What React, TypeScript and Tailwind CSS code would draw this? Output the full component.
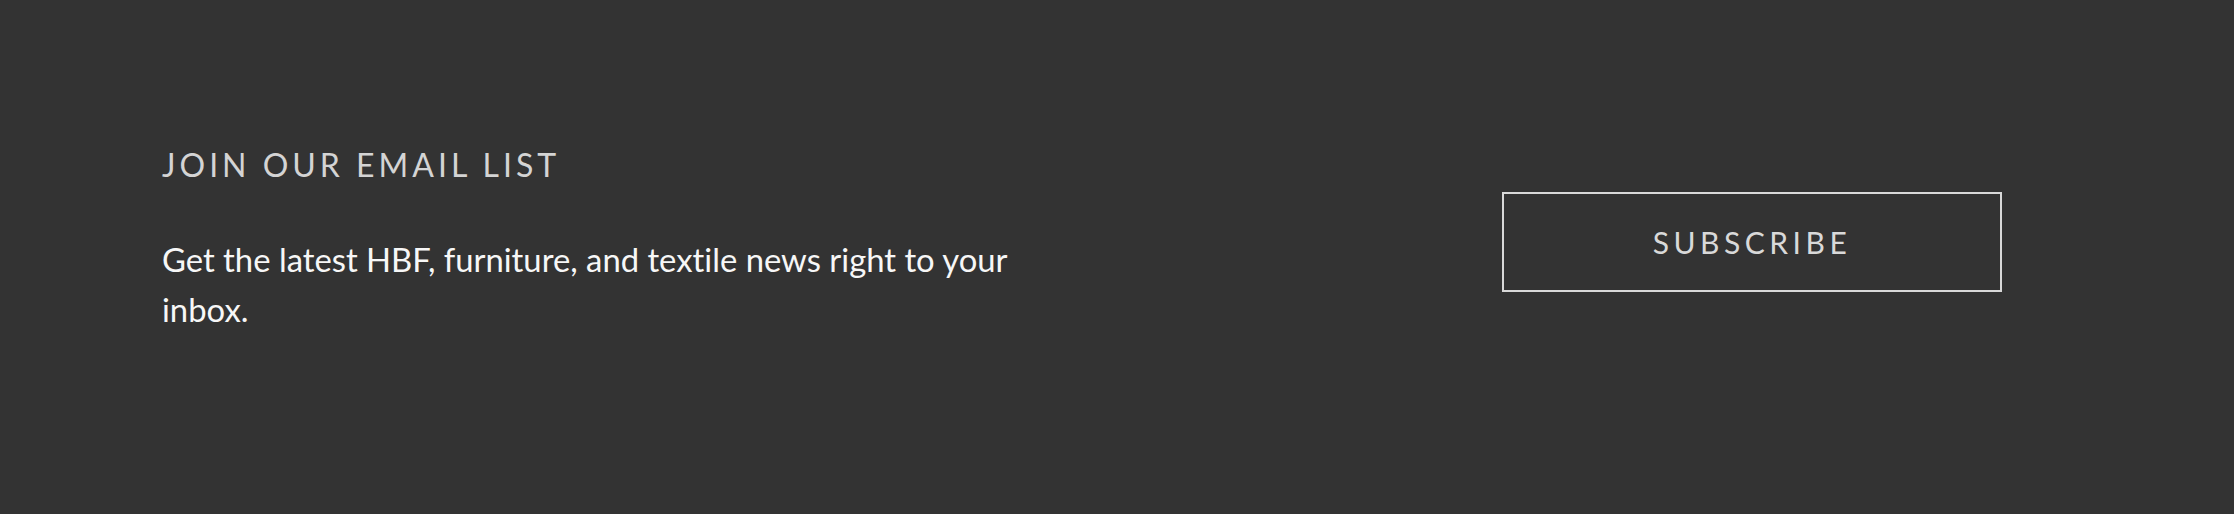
export default function App() {
    return (
        <div className="min-h-[514px] w-full bg-[#333333] font-['Lato',sans-serif] [font-variant-ligatures:none]">
            <div className="flex items-center justify-between pt-[146px] pb-[176px] pl-[162px] pr-[232px]">
                {/* Email list copy */}
                <div className="w-[910px]">
                    <h2 className="text-[32px] leading-[1.2] tracking-[0.125em] text-[#d4d4d4] uppercase">
                        Join our email list
                    </h2>
                    <p className="mt-[51px] text-[32.8px] leading-[50px] text-[#f7f7f7]">
                        Get the latest HBF, furniture, and textile news right to your inbox.
                    </p>
                </div>

                <button className="mt-[3px] flex h-[100px] w-[500px] items-center justify-center border-2 border-[#d9d9d9] text-[30px] tracking-[0.15em] text-[#d9d9d9] uppercase">
                    Subscribe
                </button>
            </div>
        </div>
    );
}
